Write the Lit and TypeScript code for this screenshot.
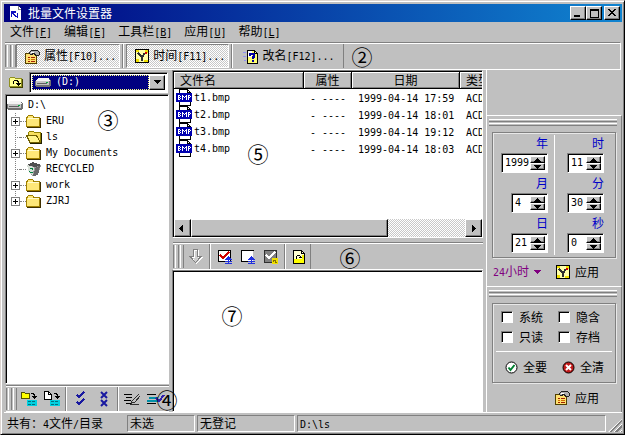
import { LitElement, html, css, svg } from "lit";
import { customElement } from "lit/decorators.js";
import { classMap } from "lit/directives/class-map.js";

// Han text is set at 12px, Latin runs in a half-width monospace.
const t = (s: string) =>
  s.split(/([\x20-\x7e]+)/).filter(Boolean).map((p) =>
    /^[\x20-\x7e]+$/.test(p) ? html`<span class="latin">${p}</span>` : p
  );

const icon = (w: number, h: number, body: unknown) =>
  html`<svg class="icon" width=${w} height=${h} viewBox="0 0 ${w} ${h}" shape-rendering="crispEdges" aria-hidden="true">${body}</svg>`;

const appIcon = icon(13, 16, svg`<path d="M1 1H9L12 4V15H1Z" fill="#fff"/><path d="M9 1V4H12" fill="none" stroke="#808080"/><path d="M2 6H7V8H5V9H6V10H7V11H8V12H6V11H5V10H4V9H3V12H2Z" fill="#1010c0"/><path d="M8 8H9V13H8Z" fill="#1010c0"/>`);
const propIcon = icon(15, 15, svg`<path d="M.5 4.500H11.500V14.500H.5Z" fill="#ffe070" stroke="#504000"/><path d="M3 8.500H5M6 8.500H10M3 12.500H5M6 12.500H10" stroke="#a02000"/><path d="M3 10.500H5M6 10.500H10" stroke="#d07000"/><path d="M4 4L7 1H12L14 3V6L11 7L9 4L6 6Z" fill="#b0b0b0" stroke="#202020"/><path d="M6 4L9 3" stroke="#fff"/>`);
const clockIcon = icon(14, 14, svg`<path d="M.5 .5H13.500V13.500H.5Z" fill="#ffffa8" stroke="#000"/><path d="M1 1H4V3H1ZM10 1H13V4H10ZM1 10H4V13H1ZM9 11H13V13H9Z" fill="#f0e000"/><path d="M3 4L7 8L10 4M7 8V12" fill="none" stroke="#303030" stroke-width="2"/><path d="M10 3H12V5H10Z" fill="#d00000"/>`);
const renameIcon = icon(15, 15, svg`<path d="M0 3.500H3M0 7.500H3M1 11.500H3" stroke="#9090f0"/><path d="M4.500 1.500H11.500L14.500 4.500V14.500H4.500Z" fill="#ffff70" stroke="#000"/><path d="M5 2H9V8H5Z" fill="#fff"/><path d="M11.500 1.500V4.500H14.500" fill="none" stroke="#000"/><path d="M7 7V5H8.500L11 5V8H9.500V10M9.500 11V13" fill="none" stroke="#0000a0" stroke-width="2"/>`);
const upIcon = icon(14, 12, svg`<path d="M.5 2.500L1.500 1.500H5.500L6.500 2.500H12.500V10.500H.5Z" fill="#ffff90" stroke="#909020"/><path d="M13.500 3V11.500H1" fill="none" stroke="#404000"/><path d="M4.500 8V5.500L6 4.500H8L9.500 6V8" fill="none" stroke="#000"/><path d="M7 7H12L9.500 10Z" fill="#000"/>`);
const driveIcon = icon(16, 11, svg`<path d="M3 1H14L16 4V8L14 10H1L0 8V4Z" fill="#707070"/><path d="M3 1H14L15 4H1Z" fill="#f4f4f4"/><path d="M1 4H14V8H1Z" fill="#c4c4c4"/><path d="M2 6.500H12" stroke="#606060"/><path d="M11 5H13V6H11Z" fill="#00b040"/>`);
const folderIcon = icon(15, 14, svg`<path d="M1.500 3.500V2.500L2.500 1.500H6.500L7.500 2.500V3.500H13.500V12.500H.5V3.500Z" fill="#ffe878" stroke="#a08000"/><path d="M1.500 4.500H12.500" stroke="#fffbd0"/><path d="M14.500 4V13.500H1" fill="none" stroke="#403000"/>`);
const openFolderIcon = icon(16, 14, svg`<path d="M2.500 11V2.500L3.500 1.500H7.500L8.500 2.500H14.500V12" fill="#f8e060" stroke="#908000"/><path d="M.5 5.500H10.500L14.500 12.500H4Z" fill="#fff48c" stroke="#706000"/><path d="M15.500 3V13.500H4" fill="none" stroke="#202000"/>`);
const binIcon = icon(16, 16, svg`<path d="M1 4L7 1L15 4L12 14L6 15L3 12Z" fill="#9a9a9a"/><path d="M1 4L7 1L15 4L9 6Z" fill="#505050"/><path d="M10 6L14 5L12 14L7 15Z" fill="#686868"/><path d="M1 4L8 6L7 14L3 12Z" fill="#d8e0d8"/><path d="M4 8L6 7L7 9M3 10L5 12L7 11" fill="none" stroke="#008040"/>`);
const bmpIcon = icon(16, 17, svg`<path d="M3.500 .5H11.500L14.500 3.500V16.500H3.500Z" fill="#fff" stroke="#000"/><path d="M11.500 .5V3.500H14.500" fill="none" stroke="#000"/><path d="M0 4H16V13H0Z" fill="#0000b0"/><path d="M2 6.500H4M2 8.500H4M2 10.500H4M2.500 6V11M4.500 7V8M4.500 9V10M6.500 6V11M10.500 6V11M7.500 7V8M8.500 8V9M9.500 7V8M12.500 6V11M13 6.500H14M13 8.500H14M14.500 7V8" stroke="#fff"/>`);
const arrowIcon = icon(14, 16, svg`<path d="M5.500 1.500H9.500V8.500H13L7.500 14.500L2 8.500H5.500Z" fill="#d0d0d0" stroke="#fff"/><path d="M4.500 .5H8.500V7.500H12L6.500 13.500L1 7.500H4.500Z" fill="none" stroke="#808080"/>`);
const blueArrow = svg`<path d="M11 7H12V8H13V9H14V10H15V11H12V12H15V13H12V14H15V15H8V14H11V13H8V12H11V11H8V10H9V9H10V8H11Z" fill="#2030e0"/>`;
const checkUpIcon = icon(16, 16, svg`<path d="M1.500 1.500H13.500V12.500H1.500Z" fill="#fff" stroke="#000"/><path d="M3 6L6 9L12 3" fill="none" stroke="#d00000" stroke-width="2"/>${blueArrow}`);
const boxUpIcon = icon(16, 16, svg`<path d="M1.500 1.500H13.500V12.500H1.500Z" fill="#fff" stroke="#000"/><path d="M13.500 2V12.500" stroke="#c0c0c0"/>${blueArrow}`);
const grayCheckIcon = icon(16, 16, svg`<path d="M1.500 1.500H13.500V13.500H1.500Z" fill="#808080" stroke="#303030"/><path d="M3 6L6 9L12 3" fill="none" stroke="#fff" stroke-width="2"/><path d="M9 9H15V15H9Z" fill="#f0e000"/><path d="M10.500 13V11H12.500V13H14" fill="none" stroke="#807000"/>`);
const refreshIcon = icon(12, 14, svg`<path d="M.5 .5H8.500L11.500 3.500V13.500H.5Z" fill="#ffffd0" stroke="#000"/><path d="M1 9H11V13H1Z" fill="#ffff00"/><path d="M9 1V5H11V9H9Z" fill="#f0f000"/><path d="M8.500 .5V3.500H11.500M3.500 9V6.500L4.500 5.500H6.500L7.500 6.500V8M6 7.500H9" fill="none" stroke="#000"/>`);
const cyanBars = svg`<path d="M6 9H16V15H6Z" fill="#00d0e0"/><path d="M7 10.500H15M7 13.500H15" stroke="#007080" stroke-dasharray="3 1"/><path d="M10 2.500H12L13.500 4V7M11 5.500H16M12 6.500H15M13 7.500H14" fill="none" stroke="#000"/>`;
const dirToIcon = icon(16, 16, svg`<path d="M.5 1.500H3.500L4.500 2.500H8.500V7.500H.5Z" fill="#ffff00" stroke="#505000"/>${cyanBars}`);
const fileToIcon = icon(16, 16, svg`<path d="M.5 .5H4.500L7.500 3.500V8.500H.5Z" fill="#fff" stroke="#000"/><path d="M4.500 .5V3.500H7.500" fill="none" stroke="#000"/>${cyanBars}`);
const checksIcon = icon(12, 16, svg`<path d="M2 4L4 6L9 1M2 11L4 13L9 8" fill="none" stroke="#1818a0" stroke-width="2"/>`);
const crossesIcon = html`<svg class="icon" width="10" height="16" viewBox="0 0 10 16" aria-hidden="true"><path d="M2 1L8 7M8 1L2 7M2 9L8 15M8 9L2 15" fill="none" stroke="#1818a0" stroke-width="2"/></svg>`;
const listEditIcon = icon(17, 14, svg`<path d="M0 2.500H8M2 5.500H8M0 8.500H7M2 11.500H8" stroke="#000"/><path d="M15 2L8 9L7 12H15M16 4L11 10L8 11" fill="none" stroke="#303030"/>`);
const listCheckIcon = icon(18, 14, svg`<path d="M0 2.500H9M0 11.500H9" stroke="#000"/><path d="M2 5.500H11M0 8.500H11" stroke="#0090a8" stroke-width="2"/><path d="M9 6L12 9L17 3" fill="none" stroke="#3020b0" stroke-width="2"/>`);
const round = (fill: string, mark: unknown) =>
  html`<svg class="icon" width="13" height="13" viewBox="0 0 13 13" aria-hidden="true"><circle cx="6.500" cy="6.500" r="5.500" fill=${fill} stroke="#000"/>${mark}</svg>`;
const okIcon = round("#fff", svg`<path d="M3.500 6.500L5.500 9L9.500 4" fill="none" stroke="#008030" stroke-width="2"/>`);
const noIcon = round("#c01818", svg`<path d="M4 4L9 9M9 4L4 9" stroke="#fff" stroke-width="2"/>`);
const tri = (dir: string) => {
  const d: Record<string, string> = {
    up: "M4 0H5V1H6V2H7V3H8V4H1V3H2V2H3V1H4Z",
    down: "M1 0H8V1H7V2H6V3H5V4H4V3H3V2H2V1H1Z",
    left: "M5 0V7H4V6H3V5H2V4H1V3H2V2H3V1H4V0Z",
    right: "M3 0V7H4V6H5V5H6V4H7V3H6V2H5V1H4V0Z",
  };
  const h = dir === "up" || dir === "down" ? 4 : 7;
  return icon(9, h, svg`<path d=${d[dir]} fill="currentColor"/>`);
};

const menus = [["文件", "F"], ["编辑", "E"], ["工具栏", "B"], ["应用", "U"], ["帮助", "L"]];
const tree = [
  { name: "ERU", icon: folderIcon, more: true },
  { name: "ls", icon: openFolderIcon, more: false },
  { name: "My Documents", icon: folderIcon, more: true },
  { name: "RECYCLED", icon: binIcon, more: false },
  { name: "work", icon: folderIcon, more: true },
  { name: "ZJRJ", icon: folderIcon, more: true },
];
const files = [
  ["t1.bmp", "1999-04-14 17:59"],
  ["t2.bmp", "1999-04-14 18:01"],
  ["t3.bmp", "1999-04-14 19:12"],
  ["t4.bmp", "1999-04-14 18:03"],
];
const dateFields = [["年", "1999"], ["月", "4"], ["日", "21"]];
const timeFields = [["时", "11"], ["分", "30"], ["秒", "0"]];

@customElement("app-root")
export class AppRoot extends LitElement {
  static styles = css`
    :host {
      --face: #c0c0c0;
      --dark: #808080;
      --dither: repeating-conic-gradient(#fff 0 25%, #c8c8c8 0 50%) 0 0 / 2px 2px;
      display: grid;
      grid-template-columns: minmax(0, 1fr);
      grid-template-rows: 18px 20px 28px minmax(0, 1fr) 20px;
      position: relative;
      box-sizing: border-box;
      height: 100vh;
      padding: 3px 2px 2px 3px;
      border: 1px solid #000;
      border-top-color: #dcd4d0;
      border-left-color: #dcd4d0;
      box-shadow: inset 1px 1px #fff, inset -1px -1px var(--dark);
      background: var(--face);
      color: #000;
      font: 12px/16px "Noto Sans CJK SC", sans-serif;
      overflow: hidden;
    }
    * { box-sizing: border-box; }
    button, input, select { margin: 0; padding: 0; border: 0; border-radius: 0; font: inherit; color: inherit; background: none; }
    .latin, .num, .drive { font-family: "DejaVu Sans Mono", monospace; font-size: 10px; white-space: pre; }
    .icon { display: block; flex: none; }
    .raised { border: 1px solid; border-color: #fff #000 #000 #fff; box-shadow: inset -1px -1px var(--dark); background: var(--face); display: flex; align-items: center; justify-content: center; }
    .sunken { border: 1px solid; border-color: var(--dark) #fff #fff var(--dark); box-shadow: inset 1px 1px #000; background: #fff; }

    .title { display: flex; align-items: center; gap: 6px; padding: 0 2px 0 5px; background: linear-gradient(90deg, #000080, #1084d0); color: #fff; }
    .title h1 { margin: 0; flex: 1; font-size: 12px; font-weight: 400; }
    .wins { display: flex; color: #000; }
    .wins button { width: 16px; height: 14px; }
    .wins .close { margin-left: 2px; }
    .menu { display: flex; align-items: center; }
    .menu button { padding: 0 6px; white-space: nowrap; }
    .toolbar { display: flex; border-top: 1px solid var(--dark); border-bottom: 1px solid #fff; padding-top: 1px; box-shadow: inset 0 1px #fff; margin-left: 1px; }
    .tools { padding-bottom: 1px; margin-right: 1px; border-right: 1px solid #fff; }
    .grip { width: 11px; flex: none; margin: 1px 0; background: linear-gradient(90deg, #fff 1px, var(--face) 1px 3px, var(--dark) 3px 4px, #0000 4px) 2px 0 / 5px 100% repeat-x; border-right: 1px solid var(--dark); }
    .tool { display: flex; align-items: center; gap: 4px; padding: 0 3px 0 8px; white-space: nowrap; }
    .tool.on { background: var(--dither); border: 1px solid; border-color: var(--dark) #fff #fff var(--dark); }
    .tool.last { border-right: 1px solid var(--dark); padding-right: 8px; }
    .sep { width: 2px; flex: none; margin: 0 2px; border-left: 1px solid var(--dark); border-right: 1px solid #fff; }

    .main { display: grid; grid-template-columns: 164px minmax(0, 1fr) 136px; column-gap: 3px; padding-left: 1px; min-height: 0; }
    .left { display: grid; grid-template-columns: minmax(0, 1fr); grid-template-rows: 24px minmax(0, 1fr) 28px; }
    .drives { display: flex; align-items: center; gap: 6px; padding: 0 1px 0 4px; }
    .combo { display: flex; flex: 1; height: 21px; min-width: 0; padding: 2px; }
    .pick { display: flex; flex: 1; align-items: center; min-width: 0; gap: 5px; padding-left: 3px; background: #000080; outline: 1px dotted #ffff80; outline-offset: -1px; }
    .drive { flex: 1; min-width: 0; appearance: none; color: #fff; }
    .drop { width: 16px; }
    .tree { overflow: hidden; padding: 2px 1px; }
    .tree ul { list-style: none; margin: 0; padding: 0; }
    .node { display: flex; align-items: center; height: 16px; gap: 5px; white-space: nowrap; }
    .kids .node { padding-left: 4px; gap: 0; }
    .kids { background: repeating-linear-gradient(#808080 0 1px, #fff 1px 2px) 8px 0 / 1px 88px no-repeat; }
    .plus { width: 9px; height: 9px; border: 1px solid var(--dark); background: linear-gradient(#000, #000) 1px 3px / 5px 1px no-repeat, linear-gradient(#000, #000) 3px 1px / 1px 5px no-repeat, #fff; }
    .stub { width: 5px; margin-left: 4px; border-top: 1px dotted var(--dark); }
    .dash { width: 6px; border-top: 1px dotted var(--dark); }
    .pic { width: 20px; display: flex; }
    .bar { margin-top: 1px; }
    .small { display: flex; align-items: center; justify-content: center; width: 23px; }

    .mid { display: grid; grid-template-columns: minmax(0, 1fr); grid-template-rows: minmax(0, 168fr) 4px 28px minmax(0, 142fr); min-width: 0; }
    .list { display: flex; flex-direction: column; min-height: 0; padding: 1px 0 0 1px; }
    .view { flex: 1; overflow: hidden; min-height: 0; }
    table { border-collapse: separate; border-spacing: 0; table-layout: fixed; width: 366px; }
    th { height: 17px; padding: 0 6px; background: var(--face); font-weight: 400; line-height: 14px; border-right: 1px solid #000; border-bottom: 1px solid #000; box-shadow: inset 1px 1px #fff, inset -1px -1px var(--dark); white-space: nowrap; }
    th.start { text-align: left; }
    td { height: 17px; padding: 0 6px; line-height: 14px; white-space: nowrap; }
    td.name { padding: 0 2px; }
    .file { display: flex; align-items: center; gap: 2px; }
    .c1 { width: 130px; } .c2 { width: 48px; } .c3 { width: 108px; } .c4 { width: 80px; }
    .scroll { display: flex; height: 18px; background: var(--dither); justify-content: space-between; }
    .scroll button { width: 17px; }
    .track { flex: 1; }
    .thumb { width: 72%; height: 100%; }

    .right { display: flex; flex-direction: column; border-left: 1px solid #fff; }
    .blank { flex: 1; }
    .sect { border-top: 1px solid #fff; padding: 3px 4px 0 2px; display: flex; flex-direction: column; border-right: 1px solid var(--dark); }
    .rails { height: 7px; background: linear-gradient(#fff 1px, var(--face) 1px 2px, var(--dark) 2px 3px, #0000 3px) 0 0 / 100% 4px repeat-y; margin-bottom: 6px; }
    .group { margin: 0 1px 0 3px; border: 1px solid var(--dark); box-shadow: inset 1px 1px #e8e8e8, 1px 1px #e8e8e8; }
    .cols { display: grid; grid-template-columns: 1fr 1fr; padding: 2px 0; }
    .col { display: flex; flex-direction: column; gap: 2px; padding: 0 6px 2px 0; }
    .col + .col { border-left: 1px solid #fff; padding-right: 11px; }
    .field { display: flex; flex-direction: column; align-items: flex-end; gap: 2px; color: #0000c8; }
    .spin { display: flex; height: 20px; width: 37px; padding: 2px; color: #000; }
    .spin.wide { width: 47px; }
    .num { flex: 1; min-width: 0; padding-left: 1px; }
    .steps { display: flex; flex-direction: column; width: 15px; }
    .steps button { flex: 1; min-height: 0; }
    .row { display: flex; align-items: center; justify-content: flex-end; height: 28px; padding-right: 18px; }
    .row.tall { height: 29px; }
    .act { display: flex; align-items: center; gap: 5px; white-space: nowrap; }
    .hours { display: flex; align-items: center; gap: 5px; color: #800080; margin-right: auto; padding-left: 4px; white-space: nowrap; }
    .checks { display: grid; grid-template-columns: 1fr 1fr; row-gap: 4px; padding: 5px 0 6px 8px; }
    .check { display: flex; align-items: center; gap: 6px; }
    .check input { appearance: none; width: 12px; height: 12px; }
    .pair { display: flex; justify-content: space-between; margin: 0 3px; padding: 7px 8px 7px 9px; border-top: 1px solid #fff; }

    .status { display: grid; grid-template-columns: 120px 68px 98px minmax(0, 1fr) 14px; column-gap: 2px; padding: 2px 0 0 1px; border-top: 1px solid #fff; }
    .cell { border: 1px solid; border-color: var(--dark) #fff #fff var(--dark); padding-left: 2px; line-height: 13px; white-space: nowrap; }
    .cell.flat { border-color: transparent; padding-left: 1px; }
    .corner { align-self: end; height: 13px; background: repeating-linear-gradient(135deg, var(--face) 0 1px, #fff 1px 2px, var(--dark) 2px 4px); clip-path: polygon(100% 0, 100% 100%, 0 100%); }
    .mark { position: absolute; font-size: 21px; line-height: 22px; width: 22px; text-align: center; pointer-events: none; }
    .m2 { left: 350px; top: 44px; } .m3 { left: 96px; top: 107px; } .m4 { left: 155px; top: 387px; }
    .m5 { left: 246px; top: 141px; } .m6 { left: 338px; top: 245px; } .m7 { left: 220px; top: 303px; }
  `;

  private field([label, value]: string[]) {
    return html`<div class="field">
      <label for=${"f" + label}>${label}</label>
      <div class=${classMap({ spin: true, sunken: true, wide: value.length > 2 })}>
        <input class="num" id=${"f" + label} .value=${value} />
        <div class="steps">
          <button class="raised" aria-label="+">${tri("up")}</button>
          <button class="raised" aria-label="-">${tri("down")}</button>
        </div>
      </div>
    </div>`;
  }

  private small(pic: unknown, label: string, last = false) {
    return html`<button class=${classMap({ small: true, last, tool: last })} aria-label=${label}>${pic}</button>`;
  }

  render() {
    return html`
      <header class="title">
        ${appIcon}
        <h1>批量文件设置器</h1>
        <div class="wins">
          <button class="raised" aria-label="最小化">${icon(8, 8, svg`<path d="M0 6H6V8H0Z"/>`)}</button>
          <button class="raised" aria-label="最大化">${icon(9, 9, svg`<path d="M0 0H9V9H0ZM1 2V8H8V2Z" fill-rule="evenodd"/>`)}</button>
          <button class="raised close" aria-label="关闭">${icon(8, 8, svg`<path d="M0 0H2V1H3V2H5V1H6V0H8V1H7V2H6V3H5V4H6V5H7V6H8V7H6V6H5V5H3V6H2V7H0V6H1V5H2V4H3V3H2V2H1V1H0Z"/>`)}</button>
        </div>
      </header>
      <nav class="menu">
        ${menus.map(([m, k]) => html`<button>${m}<span class="latin">[<u>${k}</u>]</span></button>`)}
      </nav>
      <div class="toolbar tools">
        <span class="grip"></span>
        <button class="tool on">${propIcon}<span>${t("属性[F10]...")}</span></button>
        <span class="sep"></span>
        <button class="tool on">${clockIcon}<span>${t("时间[F11]...")}</span></button>
        <span class="sep"></span>
        <button class="tool last">${renameIcon}<span>${t("改名[F12]...")}</span></button>
      </div>
      <main class="main">
        <section class="left">
          <div class="drives">
            <button aria-label="向上">${upIcon}</button>
            <div class="combo sunken">
              <div class="pick">${driveIcon}<select class="drive" aria-label="驱动器"><option>(D:)</option></select></div>
              <span class="raised drop">${tri("down")}</span>
            </div>
          </div>
          <div class="tree sunken">
            <ul>
              <li>
                <div class="node">${driveIcon}${t("D:\\")}</div>
                <ul class="kids">
                  ${tree.map((n) => html`<li class="node">
                    <span class=${n.more ? "plus" : "stub"}></span><span class="dash"></span>
                    <span class="pic">${n.icon}</span>${t(n.name)}
                  </li>`)}
                </ul>
              </li>
            </ul>
          </div>
          <div class="toolbar bar">
            <span class="grip"></span>
            ${this.small(dirToIcon, "目录")}${this.small(fileToIcon, "文件")}
            <span class="sep"></span>
            ${this.small(checksIcon, "全选")}${this.small(crossesIcon, "全不选")}
            <span class="sep"></span>
            ${this.small(listEditIcon, "登记")}${this.small(listCheckIcon, "确认")}
          </div>
        </section>
        <section class="mid">
          <div class="list sunken">
            <div class="view">
              <table>
                <thead><tr><th class="c1 start">文件名</th><th class="c2">属性</th><th class="c3">日期</th><th class="c4 start">类型</th></tr></thead>
                <tbody>
                  ${files.map(([n, d]) => html`<tr>
                    <td class="name"><span class="file">${bmpIcon}${t(n)}</span></td>
                    <td>${t("- ----")}</td><td>${t(d)}</td><td>${t("ACDSee")}</td>
                  </tr>`)}
                </tbody>
              </table>
            </div>
            <div class="scroll">
              <button class="raised" aria-label="向左">${tri("left")}</button>
              <div class="track"><div class="thumb raised"></div></div>
              <button class="raised" aria-label="向右">${tri("right")}</button>
            </div>
          </div>
          <div></div>
          <div class="toolbar">
            <span class="grip"></span>
            ${this.small(arrowIcon, "下移")}
            <span class="sep"></span>
            ${this.small(checkUpIcon, "选中")}${this.small(boxUpIcon, "不选")}${this.small(grayCheckIcon, "反选")}
            <span class="sep"></span>
            ${this.small(refreshIcon, "刷新", true)}
          </div>
          <div class="sunken"></div>
        </section>
        <aside class="right">
          <div class="blank"></div>
          <section class="sect">
            <div class="rails"></div>
            <div class="group cols">
              <div class="col">${dateFields.map((f) => this.field(f))}</div>
              <div class="col">${timeFields.map((f) => this.field(f))}</div>
            </div>
            <div class="row">
              <button class="hours"><span>${t("24小时")}</span>${icon(7, 4, svg`<path d="M0 0H7V1H6V2H5V3H4V4H3V3H2V2H1V1H0Z" fill="currentColor"/>`)}</button>
              <button class="act">${clockIcon}应用</button>
            </div>
          </section>
          <section class="sect">
            <div class="rails"></div>
            <div class="group">
              <div class="checks">
                ${["系统", "隐含", "只读", "存档"].map((c) => html`<label class="check"><input type="checkbox" class="sunken" />${c}</label>`)}
              </div>
              <div class="pair">
                <button class="act">${okIcon}全要</button>
                <button class="act">${noIcon}全清</button>
              </div>
            </div>
            <div class="row tall"><button class="act">${propIcon}应用</button></div>
          </section>
        </aside>
      </main>
      <footer class="status">
        <div class="cell flat">${t("共有：4文件/目录")}</div>
        <div class="cell">未选</div>
        <div class="cell">无登记</div>
        <div class="cell">${t("D:\\ls")}</div>
        <div class="corner"></div>
      </footer>
      ${["②", "③", "④", "⑤", "⑥", "⑦"].map((m, i) => html`<span class="mark m${i + 2}">${m}</span>`)}
    `;
  }
}
